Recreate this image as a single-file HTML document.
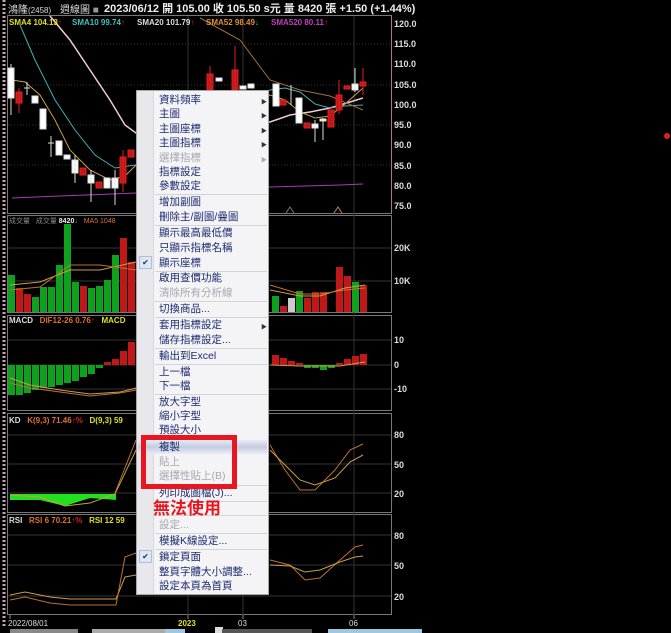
<!DOCTYPE html>
<html><head><meta charset="utf-8"><style>
*{margin:0;padding:0;box-sizing:border-box}
body{width:671px;height:633px;background:#000;overflow:hidden;position:relative;font-family:"Liberation Sans","Noto Sans CJK TC",sans-serif}
.t{position:absolute;white-space:nowrap;font-size:9px;font-weight:bold}
.menu{position:absolute;left:136px;top:90px;width:133px;height:505px;background:#f4f4f6;border:1px solid #a8a8a8;}
.gut{position:absolute;left:0;top:0;width:17px;height:100%;background:#e8e8ec;border-right:1px solid #d8d8d8}
.mi{position:absolute;left:22px;font-size:10.5px;color:#1c2a6e;white-space:nowrap;line-height:13px;font-family:"Liberation Sans","Noto Sans CJK TC",sans-serif}
.dis{color:#a6a6b0}
.sep{position:absolute;left:18px;right:1px;height:1px;background:#d4d4d8}
.arr{position:absolute;left:124px;font-size:6px;color:#333}
.chk{position:absolute;left:2px;width:13px;height:13px;background:#dde6f4;border:1px solid #aac0de;font-size:8px;color:#234;text-align:center;line-height:11px}
</style></head><body>
<svg width="671" height="633" style="position:absolute;left:0;top:0" xmlns="http://www.w3.org/2000/svg">
<line x1="4" y1="0" x2="4" y2="628" stroke="#c8a0b0" stroke-width="3" stroke-dasharray="2,2"/>
<g fill="none" stroke="#777" stroke-width="1">
<rect x="7.5" y="15.5" width="384" height="198"/>
<rect x="7.5" y="215.5" width="384" height="97"/>
<rect x="7.5" y="315.5" width="384" height="95"/>
<rect x="7.5" y="413.5" width="384" height="99"/>
<rect x="7.5" y="514.5" width="384" height="100"/>
</g>
<line x1="391.5" y1="15" x2="391.5" y2="213" stroke="#b07090"/>
<g stroke="#333" stroke-width="1">
<line x1="188" y1="16" x2="188" y2="615"/><line x1="243" y1="16" x2="243" y2="615"/><line x1="354" y1="16" x2="354" y2="615"/>
<line x1="8" y1="44" x2="391" y2="44" stroke-dasharray="1,2"/><line x1="8" y1="85" x2="391" y2="85" stroke-dasharray="1,2"/><line x1="8" y1="125" x2="391" y2="125" stroke-dasharray="1,2"/><line x1="8" y1="165" x2="391" y2="165" stroke-dasharray="1,2"/>
<line x1="8" y1="248" x2="391" y2="248"/><line x1="8" y1="281" x2="391" y2="281"/>
<line x1="8" y1="340" x2="391" y2="340"/><line x1="8" y1="365" x2="391" y2="365"/><line x1="8" y1="389" x2="391" y2="389"/>
<line x1="8" y1="435" x2="391" y2="435"/><line x1="8" y1="464" x2="391" y2="464"/><line x1="8" y1="493" x2="391" y2="493"/>
<line x1="8" y1="535" x2="391" y2="535"/><line x1="8" y1="565" x2="391" y2="565"/><line x1="8" y1="596" x2="391" y2="596"/>
</g>
<polyline fill="none" stroke="#f0c8d8" stroke-width="1.5" points="50,16 70,40 90,70 110,100 125,125 136,133 270,122 290,115 310,112 330,108 350,102 363,98"/>
<polyline fill="none" stroke="#40b0b0" stroke-width="1" points="20,25 35,60 55,100 75,130 95,155 115,168 136,165 270,90 285,88 300,92 315,104 330,108 345,106 363,105"/>
<polyline fill="none" stroke="#c8a040" stroke-width="1" points="12,80 25,82 40,95 55,120 70,150 90,170 110,180 125,176 136,165 270,95 285,100 300,112 315,118 330,116 345,104 363,88"/>
<polyline fill="none" stroke="#a07040" stroke-width="1" points="200,18 240,40 270,80 300,90 330,96 363,110"/>
<polyline fill="none" stroke="#a040b0" stroke-width="1" points="12,198 60,196 136,193 270,187 340,185 363,184"/>
<g stroke-width="1">
<g stroke="#ddd" fill="#fff">
<line x1="11" y1="64" x2="11" y2="115"/><rect x="8" y="68" width="6" height="30"/>
<line x1="27" y1="82" x2="27" y2="95"/><line x1="24" y1="88" x2="30" y2="88"/>
<rect x="32" y="96" width="6" height="7"/><rect x="40" y="109" width="6" height="20"/>
<line x1="51" y1="136" x2="51" y2="157"/><line x1="48" y1="143" x2="54" y2="143"/>
<rect x="56" y="141" width="6" height="14"/><rect x="64" y="155" width="6" height="4"/>
<rect x="72" y="160" width="6" height="13"/><line x1="75" y1="155" x2="75" y2="183"/>
<rect x="88" y="175" width="6" height="8"/><line x1="91" y1="170" x2="91" y2="202"/>
<rect x="104" y="178" width="6" height="10"/><rect x="112" y="178" width="6" height="10"/><line x1="115" y1="170" x2="115" y2="205"/>
<rect x="216" y="78" width="6" height="3"/><rect x="240" y="86" width="6" height="3"/><rect x="248" y="84" width="6" height="4"/>
<rect x="273" y="84" width="6" height="22"/><line x1="291" y1="85" x2="291" y2="105"/>
<rect x="296" y="98" width="6" height="25"/><rect x="312" y="124" width="6" height="4"/><line x1="315" y1="120" x2="315" y2="142"/>
<rect x="320" y="119" width="6" height="2"/><line x1="323" y1="118" x2="323" y2="140"/>
<rect x="352" y="84" width="6" height="6"/><line x1="355" y1="68" x2="355" y2="92"/>
</g>
<g stroke="#e02020" fill="#c01818">
<rect x="16" y="92" width="6" height="11"/><line x1="19" y1="88" x2="19" y2="113"/>
<rect x="80" y="168" width="6" height="7"/><rect x="96" y="182" width="6" height="6"/>
<rect x="120" y="157" width="6" height="26"/><line x1="123" y1="150" x2="123" y2="192"/><rect x="128" y="150" width="6" height="7"/>
<rect x="207" y="74" width="6" height="19"/><line x1="210" y1="66" x2="210" y2="95"/>
<rect x="232" y="70" width="6" height="20"/><line x1="235" y1="46" x2="235" y2="95"/>
<rect x="280" y="100" width="6" height="5"/><rect x="304" y="123" width="6" height="5"/>
<rect x="328" y="110" width="6" height="17"/><rect x="336" y="95" width="6" height="15"/><line x1="339" y1="80" x2="339" y2="114"/>
<rect x="344" y="86" width="6" height="3"/><rect x="360" y="82" width="6" height="4"/><line x1="363" y1="68" x2="363" y2="95"/>
</g></g>
<polyline fill="none" stroke="#777" points="286,213 290,207 294,213"/><polyline fill="none" stroke="#c08060" points="334,213 338,207 342,213"/>
<g fill="#10a020">
<rect x="8" y="275" width="7" height="37"/><rect x="32" y="297" width="7" height="15"/><rect x="40" y="287" width="7" height="25"/><rect x="48" y="287" width="7" height="25"/><rect x="56" y="265" width="7" height="47"/><rect x="64" y="224" width="7" height="88"/><rect x="72" y="282" width="7" height="30"/><rect x="88" y="288" width="7" height="24"/><rect x="96" y="286" width="7" height="26"/><rect x="104" y="280" width="7" height="32"/><rect x="112" y="255" width="7" height="57"/>
<rect x="272" y="296" width="7" height="16"/><rect x="296" y="291" width="7" height="21"/><rect x="352" y="282" width="7" height="30"/>
</g>
<g fill="#c01818"><rect x="16" y="288" width="7" height="24"/><rect x="24" y="294" width="7" height="18"/><rect x="80" y="286" width="7" height="26"/><rect x="120" y="238" width="7" height="74"/><rect x="128" y="262" width="7" height="50"/>
<rect x="280" y="306" width="7" height="6"/><rect x="304" y="298" width="7" height="14"/><rect x="312" y="292" width="7" height="20"/><rect x="320" y="292" width="7" height="20"/><rect x="336" y="267" width="7" height="45"/><rect x="344" y="276" width="7" height="36"/><rect x="360" y="285" width="7" height="27"/></g>
<rect x="288" y="298" width="7" height="14" fill="#ccc"/>
<polyline fill="none" stroke="#c8a040" points="10,285 40,282 70,270 100,270 136,262"/><polyline fill="none" stroke="#c07030" points="10,290 40,287 70,265 100,265 136,270"/>
<polyline fill="none" stroke="#c8a040" points="270,290 300,296 320,296 345,288 365,285"/><polyline fill="none" stroke="#c07030" points="270,285 300,294 320,294 345,290 365,288"/>
<g fill="#10a020"><rect x="8" y="365" width="7" height="30"/><rect x="16" y="365" width="7" height="30"/><rect x="24" y="365" width="7" height="28"/><rect x="32" y="365" width="7" height="25"/><rect x="40" y="365" width="7" height="23"/><rect x="48" y="365" width="7" height="22"/><rect x="56" y="365" width="7" height="20"/><rect x="64" y="365" width="7" height="18"/><rect x="72" y="365" width="7" height="16"/><rect x="80" y="365" width="7" height="12"/><rect x="88" y="365" width="7" height="9"/><rect x="96" y="365" width="7" height="3"/>
<rect x="304" y="365" width="7" height="3"/><rect x="312" y="365" width="7" height="3"/><rect x="320" y="365" width="7" height="5"/><rect x="328" y="365" width="7" height="3"/></g>
<g fill="#c01818"><rect x="104" y="362" width="7" height="3"/><rect x="112" y="359" width="7" height="6"/><rect x="120" y="351" width="7" height="14"/><rect x="128" y="342" width="7" height="23"/>
<rect x="272" y="355" width="7" height="10"/><rect x="280" y="358" width="7" height="7"/><rect x="288" y="361" width="7" height="4"/><rect x="296" y="363" width="7" height="2"/><rect x="336" y="363" width="7" height="2"/><rect x="344" y="359" width="7" height="6"/><rect x="352" y="356" width="7" height="9"/><rect x="360" y="354" width="7" height="11"/></g>
<polyline fill="none" stroke="#c8a040" points="10,378 30,385 60,390 90,394 120,392 136,388"/><polyline fill="none" stroke="#c07030" points="10,383 30,388 60,392 90,396 120,393 136,390"/>
<polyline fill="none" stroke="#c8a040" points="270,365 300,366 340,366 365,362"/>
<polygon fill="#20e020" points="10,494 116,494 116,500 90,498 65,506 40,500 10,500"/>
<polyline fill="none" stroke="#c8a040" points="10,495 40,497 65,506 90,503 115,494 136,450"/><polyline fill="none" stroke="#c07030" points="115,493 136,440"/>
<polyline fill="none" stroke="#c07030" points="270,445 285,470 300,490 315,490 335,470 350,450 363,444"/>
<polyline fill="none" stroke="#c8a040" points="270,450 285,465 300,480 315,485 335,478 350,462 363,455"/>
<polyline fill="none" stroke="#c8a040" points="10,595 25,592 50,597 70,599 90,599 116,599 125,577 136,575"/><polyline fill="none" stroke="#c07030" points="10,600 25,597 50,603 70,605 90,605 116,605 125,557 136,553"/>
<polyline fill="none" stroke="#c07030" points="270,560 290,565 305,580 320,578 340,560 355,547 363,545"/><polyline fill="none" stroke="#c8a040" points="270,565 290,566 305,572 320,570 340,562 355,557 363,556"/>
<g stroke="#888"><line x1="10" y1="615" x2="10" y2="619"/><line x1="188" y1="615" x2="188" y2="619"/><line x1="243" y1="615" x2="243" y2="619"/><line x1="354" y1="615" x2="354" y2="619"/></g>
<rect x="10" y="629" width="68" height="4" fill="#888"/><rect x="92" y="629" width="80" height="4" fill="#aaa"/><rect x="165" y="629" width="20" height="4" fill="#9cc8e0"/><rect x="215" y="627" width="8" height="6" fill="#ddd"/><rect x="222" y="629" width="90" height="4" fill="#555"/><rect x="328" y="629" width="94" height="4" fill="#9cc8e0"/>
<circle cx="667" cy="136" r="3" fill="#e02020"/>
</svg>
<div class="t" style="left:8px;top:1px;color:#ddd;font-weight:normal;font-size:10px">鴻隆<span style="font-size:8px">(2458)</span></div>
<div class="t" style="left:60px;top:1px;color:#ddd;font-weight:normal;font-size:10px">週線圖 <span style="color:#999">■</span></div>
<div class="t" style="left:104px;top:0px;color:#eee;font-size:11px">2023/06/12 開 105.00 收 105.50 s元 量 8420 張 +1.50 (+1.44%)</div>
<div class="t" style="left:9px;top:18px;color:#e0e020;font-size:8px">SMA4 104.13<span style="color:#e02020">↑</span></div>
<div class="t" style="left:72px;top:18px;color:#40c0c0;font-size:8px">SMA10 99.74<span style="color:#e02020">↑</span></div>
<div class="t" style="left:137px;top:18px;color:#ddd;font-size:8px">SMA20 101.79<span style="color:#e02020">↑</span></div>
<div class="t" style="left:206px;top:18px;color:#e09030;font-size:8px">SMA52 98.49<span style="color:#20d020">↓</span></div>
<div class="t" style="left:271px;top:18px;color:#c040c0;font-size:8px">SMA520 80.11<span style="color:#e02020">↑</span></div>
<div class="t" style="left:9px;top:216px;color:#888;font-size:7px;font-weight:normal">成交量 &nbsp; 成交量 <b style="color:#eee">8420</b><span style="color:#20d020">↓</span> &nbsp; <span style="color:#e07030">MA5 1048</span></div>
<div class="t" style="left:9px;top:316px;color:#ddd;font-size:8px">MACD &nbsp; <span style="color:#e07030">DIF12-26 0.76</span><span style="color:#e02020">↑</span> &nbsp; <span style="color:#e0e020">MACD</span></div>
<div class="t" style="left:9px;top:416px;color:#ddd;font-size:8px">KD &nbsp; <span style="color:#e07030">K(9,3) 71.46</span><span style="color:#e02020">↑%</span> &nbsp; <span style="color:#e0e020">D(9,3) 59</span></div>
<div class="t" style="left:9px;top:516px;color:#ddd;font-size:8px">RSI &nbsp; <span style="color:#e07030">RSI 6 70.21</span><span style="color:#e02020">↑%</span> &nbsp; <span style="color:#e0e020">RSI 12 59</span></div>
<div style="position:absolute;left:394px;top:0;color:#ddd;font-size:8px;font-weight:bold;line-height:10px">
<div class="t" style="top:19px">120.0</div><div class="t" style="top:39px">115.0</div><div class="t" style="top:59px">110.0</div><div class="t" style="top:80px">105.0</div><div class="t" style="top:100px">100.0</div><div class="t" style="top:120px">95.0</div><div class="t" style="top:140px">90.0</div><div class="t" style="top:161px">85.0</div><div class="t" style="top:181px">80.0</div><div class="t" style="top:201px">75.0</div>
<div class="t" style="top:243px">20K</div><div class="t" style="top:276px">10K</div>
<div class="t" style="top:335px">10</div><div class="t" style="top:360px">0</div><div class="t" style="top:384px">-10</div>
<div class="t" style="top:430px">80</div><div class="t" style="top:460px">50</div><div class="t" style="top:489px">20</div>
<div class="t" style="top:531px">80</div><div class="t" style="top:561px">50</div><div class="t" style="top:592px">20</div>
</div>
<div class="t" style="left:8px;top:619px;color:#ddd;font-size:8px;font-weight:normal">2022/08/01</div>
<div class="t" style="left:178px;top:619px;color:#e0e020;font-size:8px">2023</div>
<div class="t" style="left:238px;top:619px;color:#ddd;font-size:8px;font-weight:normal">03</div>
<div class="t" style="left:349px;top:619px;color:#ddd;font-size:8px;font-weight:normal">06</div>
<div class="menu"><div class="gut"></div>
<div class="mi" style="top:3px">資料頻率</div><div class="arr" style="top:6px">▶</div>
<div class="mi" style="top:17px">主圖</div><div class="arr" style="top:20px">▶</div>
<div class="mi" style="top:32px">主圖座標</div><div class="arr" style="top:35px">▶</div>
<div class="mi" style="top:46px">主圖指標</div><div class="arr" style="top:49px">▶</div>
<div class="mi dis" style="top:61px">選擇指標</div><div class="arr" style="top:64px;color:#aaa">▶</div>
<div class="mi" style="top:75px">指標設定</div>
<div class="mi" style="top:89px">參數設定</div>
<div class="sep" style="top:103px"></div>
<div class="mi" style="top:105px">增加副圖</div>
<div class="mi" style="top:120px">刪除主/副圖/疊圖</div>
<div class="sep" style="top:134px"></div>
<div class="mi" style="top:136px">顯示最高最低價</div>
<div class="mi" style="top:151px">只顯示指標名稱</div>
<div class="chk" style="top:165px">✔</div><div class="mi" style="top:166px">顯示座標</div>
<div class="sep" style="top:180px"></div>
<div class="mi" style="top:181px">啟用查價功能</div>
<div class="mi dis" style="top:196px">清除所有分析線</div>
<div class="sep" style="top:210px"></div>
<div class="mi" style="top:212px">切換商品...</div>
<div class="sep" style="top:226px"></div>
<div class="mi" style="top:228px">套用指標設定</div><div class="arr" style="top:231px">▶</div>
<div class="mi" style="top:243px">儲存指標設定...</div>
<div class="sep" style="top:257px"></div>
<div class="mi" style="top:259px">輸出到Excel</div>
<div class="sep" style="top:273px"></div>
<div class="mi" style="top:275px">上一檔</div>
<div class="mi" style="top:289px">下一檔</div>
<div class="sep" style="top:303px"></div>
<div class="mi" style="top:305px">放大字型</div>
<div class="mi" style="top:319px">縮小字型</div>
<div class="mi" style="top:333px">預設大小</div>
<div style="position:absolute;left:1px;right:1px;top:349px;height:14px;background:linear-gradient(#e8ecf6,#c4cce0,#e8ecf6)"></div>
<div class="mi" style="top:350px">複製</div>
<div class="mi dis" style="top:365px">貼上</div>
<div class="mi dis" style="top:379px">選擇性貼上(B)</div>
<div class="sep" style="top:394px"></div>
<div class="mi" style="top:396px">列印成圖檔(J)...</div>
<div class="sep" style="top:410px"></div>
<div class="sep" style="top:424px"></div>
<div class="mi dis" style="top:428px">設定...</div>
<div class="sep" style="top:442px"></div>
<div class="mi" style="top:444px">模擬K線設定...</div>
<div class="sep" style="top:458px"></div>
<div class="chk" style="top:459px">✔</div><div class="mi" style="top:460px">鎖定頁面</div>
<div class="mi" style="top:475px">整頁字體大小調整...</div>
<div class="mi" style="top:489px">設定本頁為首頁</div>
</div>
<div style="position:absolute;left:141px;top:435px;width:96px;height:54px;border:5px solid #e8161e"></div>
<div class="t" style="left:153px;top:494px;color:#e8161e;font-size:17px;font-family:'Noto Sans CJK TC',sans-serif">無法使用</div>
</body></html>
